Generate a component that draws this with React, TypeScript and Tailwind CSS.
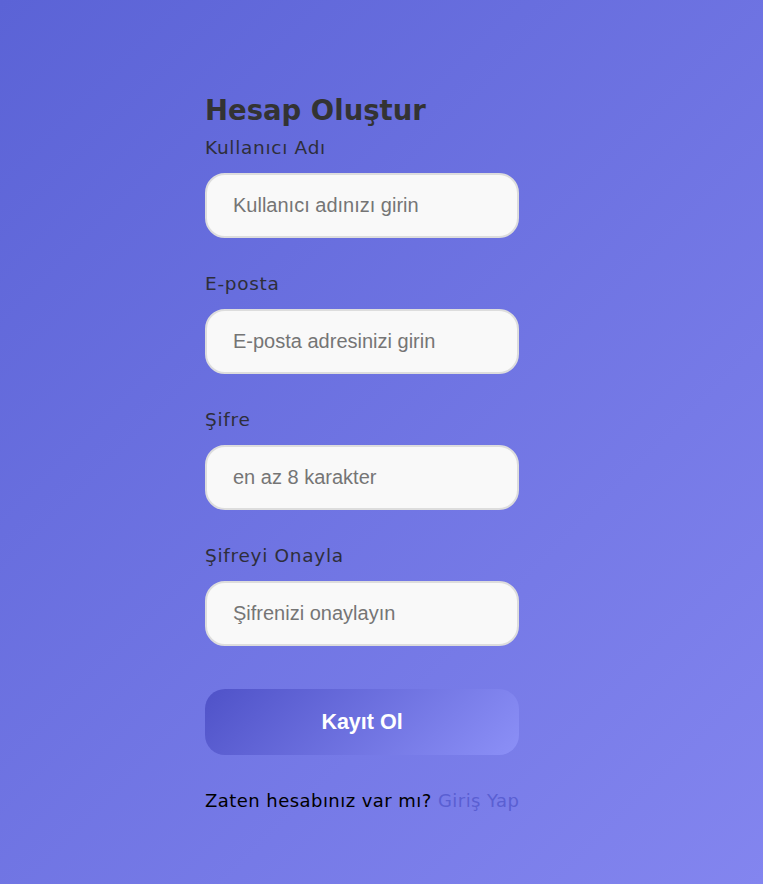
import React from 'react';

const fields = [
  { label: 'Kullanıcı Adı', placeholder: 'Kullanıcı adınızı girin', type: 'text' },
  { label: 'E-posta', placeholder: 'E-posta adresinizi girin', type: 'email' },
  { label: 'Şifre', placeholder: 'en az 8 karakter', type: 'password' },
  { label: 'Şifreyi Onayla', placeholder: 'Şifrenizi onaylayın', type: 'password' },
];

export default function App() {
  return (
    <div className="min-h-[884px] w-full bg-[linear-gradient(135deg,#5b63d6,#8385ef)] flex justify-center">
      <div className="w-[353px] pt-[89px] font-['DejaVu_Sans',sans-serif]">
        {/* Title */}
        <h1 className="text-[27.5px] leading-[42px] font-bold text-[#333]">
          Hesap Oluştur
        </h1>

        {/* Fields */}
        <form className="flex flex-col">
          {fields.map((f, i) => (
            <div key={f.label} className={i === 0 ? 'mt-[3px]' : 'mt-[32px]'}>
              <label className="block text-[18.5px] leading-[27px] tracking-[0.7px] text-[#2e2e3a]">
                {f.label}
              </label>
              <input
                type={f.type}
                placeholder={f.placeholder}
                className="mt-[12px] block w-[314px] h-[65px] rounded-[20px] border-2 border-[#dddddd] bg-[#f9f9f9] pl-[26px] text-[20px] font-['Liberation_Sans',Arial,sans-serif] text-[#333] placeholder:text-[#757575] outline-none"
              />
            </div>
          ))}

          <button
            type="button"
            className="mt-[43px] w-[314px] h-[66px] rounded-[20px] bg-[linear-gradient(135deg,#4f52c8,#8c90f7)] text-white text-[21.5px] font-bold font-['Liberation_Sans',Arial,sans-serif]"
          >
            Kayıt Ol
          </button>
        </form>

        {/* Footer */}
        <p className="mt-[32px] text-[18px] leading-[27px] tracking-[0.45px] text-black">
          Zaten hesabınız var mı? <a href="#" className="text-[#5a5fd2]">Giriş Yap</a>
        </p>
      </div>
    </div>
  );
}
